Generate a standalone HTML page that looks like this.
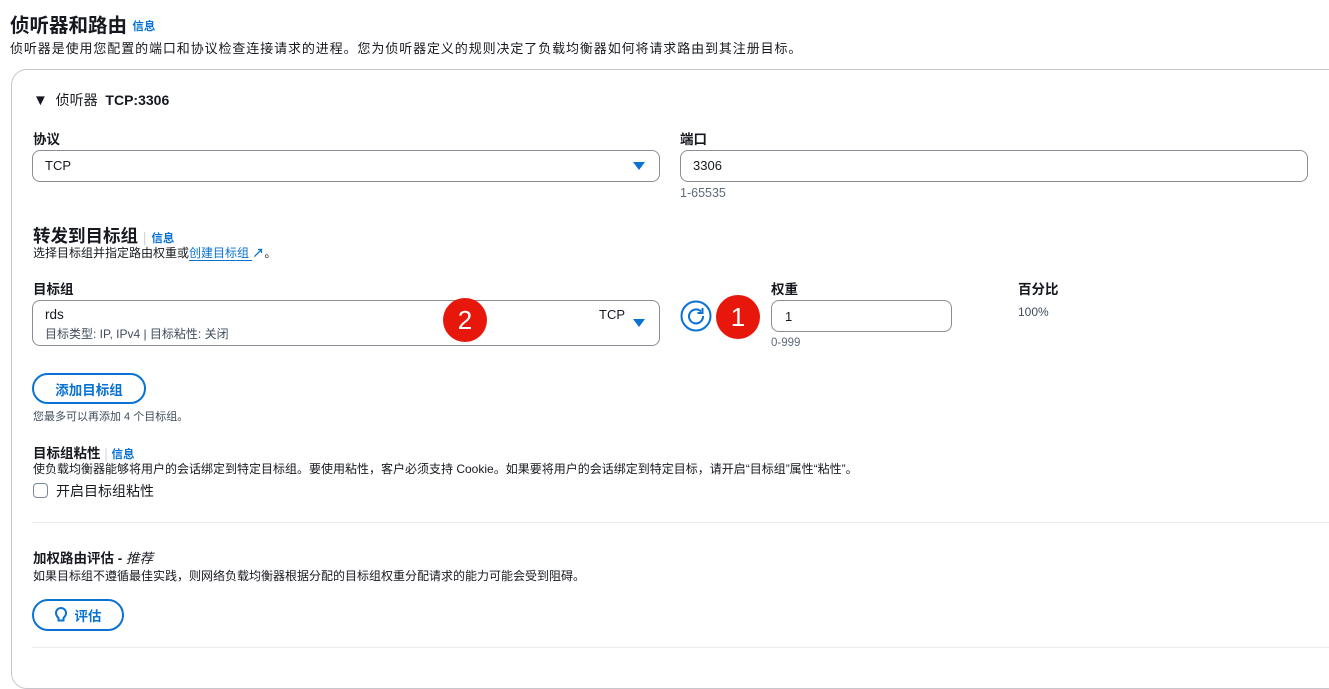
<!DOCTYPE html>
<html><head><meta charset="utf-8"><style>
*{box-sizing:border-box;margin:0;padding:0}
body{width:1329px;height:651px;overflow:hidden;background:#fff;font-family:"Liberation Sans","Noto Sans CJK SC",sans-serif;color:#16191f;position:relative}
.a{position:absolute;white-space:nowrap}
.s{font-size:12px;color:#16191f}
.sm{font-size:11.5px;color:#5f6b7a}
.lb{font-size:13.5px;font-weight:bold}
.info{color:#0972d3;font-size:11.5px;font-weight:bold}
.inp{position:absolute;border:1px solid #8c8c94;border-radius:8px;background:#fff}
.btn{position:absolute;border:2px solid #0972d3;border-radius:16px;color:#0972d3;font-weight:bold;font-size:13.5px;display:flex;align-items:center;justify-content:center}
.tri{position:absolute;width:0;height:0;border-left:6px solid transparent;border-right:6px solid transparent;border-top:8px solid #0972d3}
.badge{position:absolute;width:44px;height:44px;border-radius:50%;background:#e8170b;color:#fff;font-size:26px;display:flex;align-items:center;justify-content:center}
.hr{position:absolute;height:1px;background:#e9ebed}
</style></head><body>
<div class="a" style="left:10px;top:9px;font-size:19.5px;font-weight:bold">侦听器和路由 <span class="info" style="vertical-align:2px">信息</span></div>
<div class="a" style="left:10px;top:38px;font-size:13px;letter-spacing:0.9px">侦听器是使用您配置的端口和协议检查连接请求的进程。您为侦听器定义的规则决定了负载均衡器如何将请求路由到其注册目标。</div>
<div style="position:absolute;left:11px;top:69px;width:1340px;height:620px;border:1px solid #c6c6cd;border-radius:16px"></div>
<div class="a" style="left:33px;top:90px;font-size:14px"><span style="font-size:15px">▼</span> &nbsp;侦听器 &nbsp;<b>TCP:3306</b></div>
<div class="a lb" style="left:33px;top:128px">协议</div>
<div class="inp" style="left:32px;top:150px;width:628px;height:32px"></div>
<div class="a" style="left:45px;top:158px;font-size:13px">TCP</div>
<div class="tri" style="left:633px;top:162px"></div>
<div class="a lb" style="left:680px;top:128px">端口</div>
<div class="inp" style="left:680px;top:150px;width:628px;height:32px"></div>
<div class="a" style="left:693px;top:158px;font-size:13px">3306</div>
<div class="a sm" style="left:680px;top:186px;font-size:12.5px">1-65535</div>
<div class="a" style="left:33px;top:223px;font-size:17.5px;font-weight:bold">转发到目标组 <span style="color:#d1d5db;font-weight:normal;font-size:14px">|</span> <span class="info">信息</span></div>
<div class="a" style="left:33px;top:244px;font-size:12px">选择目标组并指定路由权重或<span style="color:#0972d3;border-bottom:1px solid #0972d3">创建目标组 </span> <span style="color:#0972d3;font-weight:bold">↗</span>。</div>
<div class="a lb" style="left:33px;top:278px">目标组</div>
<div class="inp" style="left:32px;top:300px;width:628px;height:46px"></div>
<div class="a" style="left:45px;top:307px;font-size:13.5px">rds</div>
<div class="a sm" style="left:45px;top:325px;color:#414d5c;font-size:12px">目标类型: IP, IPv4 | 目标粘性: 关闭</div>
<div class="a" style="left:599px;top:307px;font-size:13px">TCP</div>
<div class="tri" style="left:633px;top:319px"></div>
<div class="badge" style="left:443px;top:298px">2</div>
<svg class="a" style="left:680px;top:300px" width="32" height="32" viewBox="0 0 32 32"><circle cx="16" cy="16" r="14.5" fill="none" stroke="#0972d3" stroke-width="2"/><path d="M21 11.5A7 7 0 1 0 23 16" fill="none" stroke="#0972d3" stroke-width="2"/><path d="M22.5 8v5h-5" fill="none" stroke="#0972d3" stroke-width="2"/></svg>
<div class="badge" style="left:716px;top:295px">1</div>
<div class="a lb" style="left:771px;top:278px">权重</div>
<div class="inp" style="left:771px;top:300px;width:181px;height:32px"></div>
<div class="a" style="left:785px;top:309px;font-size:13px">1</div>
<div class="a sm" style="left:771px;top:337px">0-999</div>
<div class="a lb" style="left:1018px;top:278px">百分比</div>
<div class="a s" style="left:1018px;top:305px;color:#414d5c">100%</div>
<div class="btn" style="left:32px;top:373px;width:114px;height:31px">添加目标组</div>
<div class="a sm" style="left:33px;top:408px;color:#414d5c;font-size:11px">您最多可以再添加 4 个目标组。</div>
<div class="a lb" style="left:33px;top:442px">目标组粘性 <span style="color:#d1d5db;font-weight:normal">|</span> <span class="info">信息</span></div>
<div class="a" style="left:33px;top:460px;font-size:12px">使负载均衡器能够将用户的会话绑定到特定目标组。要使用粘性，客户必须支持 Cookie。如果要将用户的会话绑定到特定目标，请开启“目标组”属性“粘性”。</div>
<div style="position:absolute;left:33px;top:483px;width:15px;height:15px;border:1px solid #7d8998;border-radius:4px"></div>
<div class="a" style="left:56px;top:481px;font-size:14px">开启目标组粘性</div>
<div class="hr" style="left:32px;top:522px;width:1297px"></div>
<div class="a lb" style="left:33px;top:547px">加权路由评估 - <i style="font-weight:normal">推荐</i></div>
<div class="a" style="left:33px;top:567px;font-size:12px">如果目标组不遵循最佳实践，则网络负载均衡器根据分配的目标组权重分配请求的能力可能会受到阻碍。</div>
<div class="btn" style="left:32px;top:599px;width:92px;height:32px"><svg width="12" height="16" viewBox="0 0 12 16" style="margin-right:8px"><path d="M3.5 11C2 9.5 1 8.3 1 6a5 5 0 0 1 10 0c0 2.3-1 3.5-2.5 5v2.5h-5z" fill="none" stroke="#0972d3" stroke-width="2"/></svg>评估</div>
<div class="hr" style="left:32px;top:647px;width:1297px"></div>
</body></html>
